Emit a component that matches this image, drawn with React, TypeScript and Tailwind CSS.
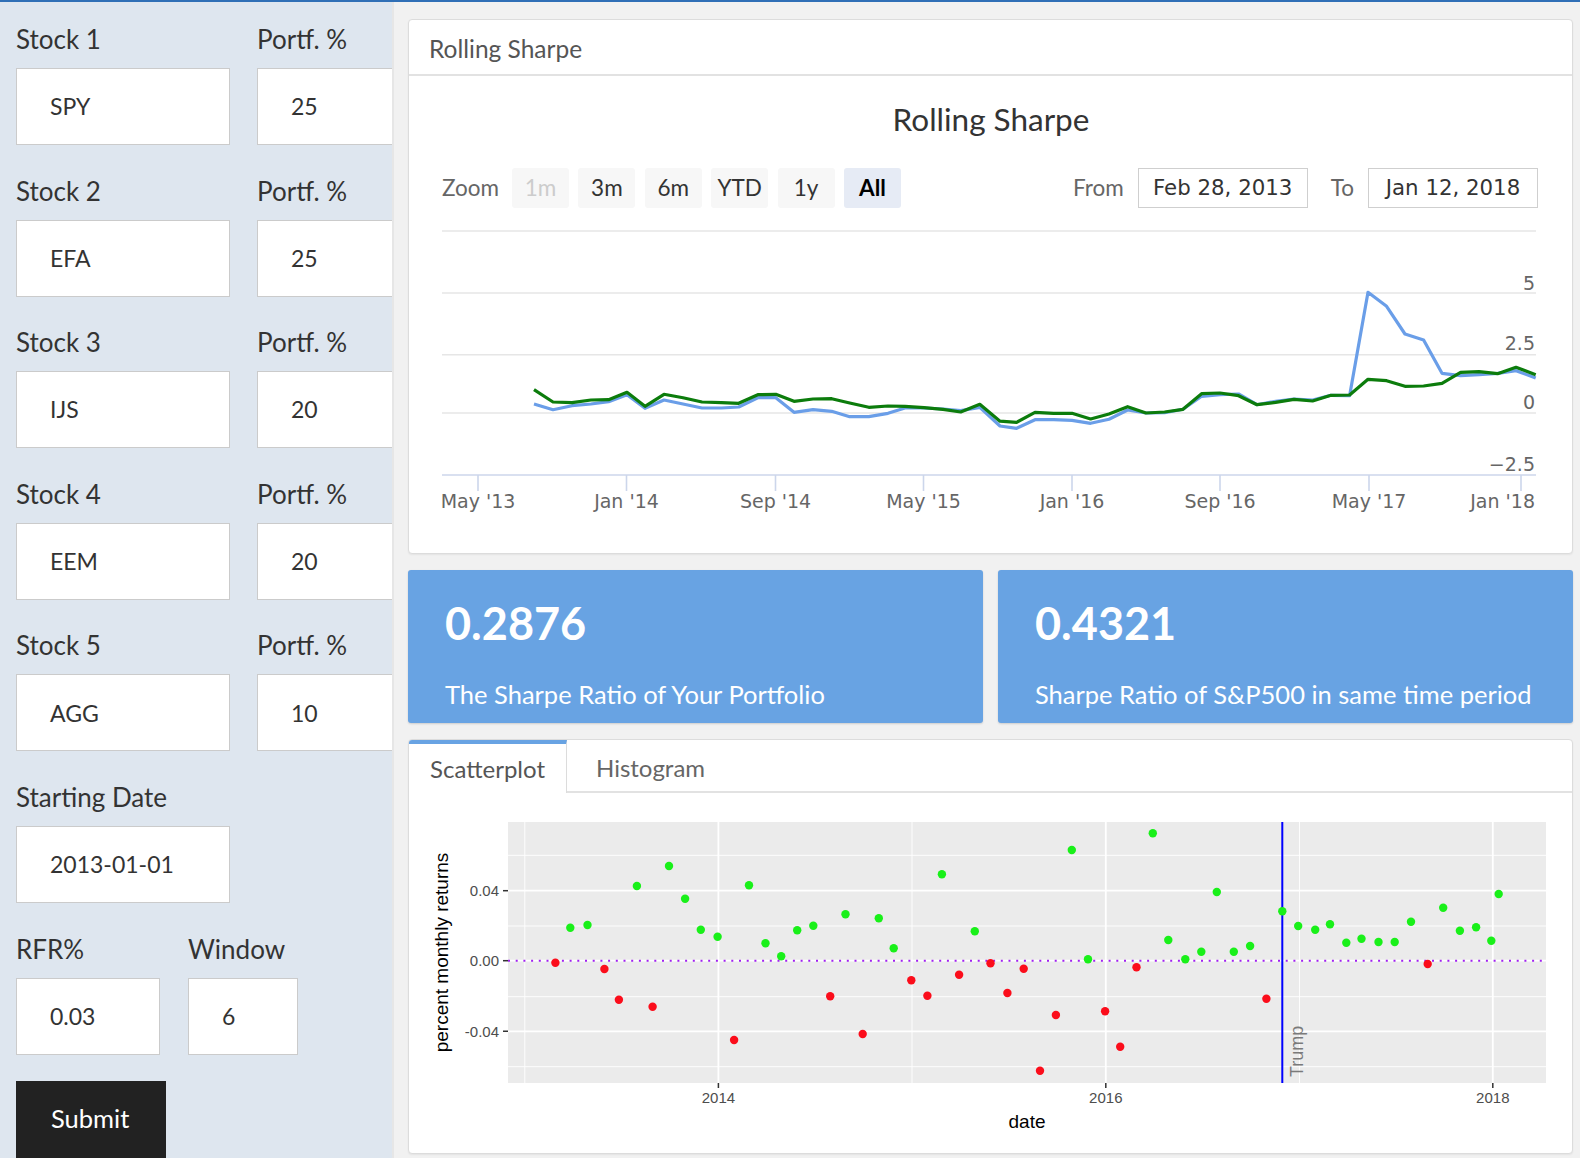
import React from "react";

const greenPts: [number, number][] = [
  [534, 390.7], [553, 403], [572, 403.7], [591, 401], [608.6, 400.7], [627, 393.3], [645, 407.3], [664, 395.3],
  [683, 398.7], [702, 403], [721.5, 403.7], [738.7, 404.3], [757.8, 395.7], [775.8, 395.3], [794, 402.3], [813, 400],
  [831.7, 399.7], [849.7, 404], [868.8, 408.3], [888, 407], [905, 407.3], [924, 408.7], [943, 410.3], [960.7, 413],
  [979.8, 405.3], [1000, 422.2], [1016.6, 423.3], [1035, 413.3], [1053.6, 414.3], [1072, 414.3], [1090.6, 420],
  [1109, 415], [1127.6, 407.7], [1146, 414], [1164.6, 413], [1183, 410.3], [1201.6, 394.7], [1220, 394],
  [1238.6, 396.7], [1257, 405.7], [1275.6, 403.3], [1294, 400.3], [1312.6, 402], [1331, 396.3], [1349.6, 396],
  [1368, 380.3], [1386.6, 381.7], [1405, 387.3], [1423.6, 387], [1442, 384.3], [1460.6, 373.3], [1479, 372.7],
  [1497.6, 374.7], [1516, 368.3], [1535.7, 375.7],
];

const blueY = [
  405, 410.7, 406.7, 405, 402.7, 395.7, 409.3, 401, 405, 409, 409, 408, 398.7, 398.7, 413.3, 410.7, 412.3, 417.7,
  417.7, 414.3, 409, 409, 410, 411.7, 408.3, 427, 429.3, 420.7, 420.7, 421.3, 424.3, 420.3, 411, 414, 413.7, 410.3,
  397.3, 395.7, 395, 405.7, 402.3, 400, 401, 396.3, 396.7, 293.3, 307.3, 335, 341, 374.3, 376.7, 375.7, 374.3,
  371.7, 379,
];

const bluePts: [number, number][] = greenPts.map((p, i) => [p[0], blueY[i]]);

const toPath = (pts: [number, number][]) => pts.map((p, i) => `${i === 0 ? "M" : "L"}${p[0]} ${p[1]}`).join(" ");

// scatter: [x, y, positive]
const scatter: [number, number, boolean][] = [
  [555.4, 962.7, false], [570.3, 927.7, true], [587.5, 925, true], [604.4, 969, false], [618.9, 999.7, false],
  [636.9, 886, true], [652.6, 1006.7, false], [669, 866, true], [685.1, 898.7, true], [700.8, 929.7, true],
  [717.6, 936.7, true], [734.1, 1040, false], [749, 885.3, true], [765.5, 943.3, true], [781.2, 956.3, true],
  [797.2, 930.3, true], [813.3, 925.7, true], [830.2, 996.3, false], [845.5, 914.3, true], [862.7, 1034, false],
  [878.8, 918.3, true], [893.7, 948.3, true], [911.3, 980.3, false], [927.4, 995.7, false], [941.9, 874.3, true],
  [959.1, 974.7, false], [974.8, 931.3, true], [990.5, 963.3, false], [1007.4, 993, false], [1023.7, 968.7, false],
  [1040, 1070.7, false], [1055.9, 1015, false], [1071.8, 850, true], [1088, 959.3, true], [1105.1, 1011.3, false],
  [1120.2, 1046.7, false], [1136.5, 967.3, false], [1152.8, 833.3, true], [1168.3, 940, true], [1185.3, 959.3, true],
  [1201.3, 951.7, true], [1216.8, 892, true], [1233.8, 951.7, true], [1250.1, 946, true], [1266.4, 998.7, false],
  [1282.3, 911.3, true], [1298.2, 926, true], [1315.2, 929.7, true], [1330, 924.3, true], [1346.3, 942.7, true],
  [1361.5, 938.7, true], [1378.5, 942, true], [1394.7, 942, true], [1411, 921.7, true], [1427.7, 964, false],
  [1443.2, 907.7, true], [1459.9, 930.7, true], [1476.1, 927.3, true], [1491.3, 940.7, true], [1498.7, 894, true],
];

const stockRows = [
  ["Stock 1", "SPY", "25"],
  ["Stock 2", "EFA", "25"],
  ["Stock 3", "IJS", "20"],
  ["Stock 4", "EEM", "20"],
  ["Stock 5", "AGG", "10"],
];

function Field({ label, value, w }: { label: string; value: string; w: string }) {
  return (
    <div className={`${w} shrink-0`}>
      <div className="h-[38px] leading-[38px] text-[26px] text-[#333] mb-[10px] whitespace-nowrap">{label}</div>
      <div className="h-[77px] border-[1.5px] border-[#cbcbcb] bg-white flex items-center pl-[33px] text-[23px] text-[#333]">
        {value}
      </div>
    </div>
  );
}

function Sidebar() {
  return (
    <aside className="w-[394px] shrink-0 bg-[#dee6ef] border-r-2 border-[#e6e6e6] overflow-hidden pt-[18px] pl-[16px]">
      {stockRows.map(([l, v, p]) => (
        <div key={l} className="flex gap-[27px] mb-[26.6px] w-[460px]">
          <Field label={l} value={v} w="w-[214px]" />
          <Field label="Portf. %" value={p} w="w-[214px]" />
        </div>
      ))}
      <div className="flex mb-[26.6px]">
        <Field label="Starting Date" value="2013-01-01" w="w-[214px]" />
      </div>
      <div className="flex gap-[28px] mb-[26px]">
        <Field label="RFR%" value="0.03" w="w-[144px]" />
        <Field label="Window" value="6" w="w-[110px]" />
      </div>
      <button className="w-[150px] h-[78px] bg-[#222] text-white text-[25.5px] text-left pl-[35px] pb-[3px]">Submit</button>
    </aside>
  );
}

const HC = "DejaVu Sans, Verdana, sans-serif";

function RollingSharpe() {
  const xTicks: [number, string][] = [
    [478, "May '13"], [626.5, "Jan '14"], [775.5, "Sep '14"], [923.5, "May '15"], [1072, "Jan '16"],
    [1220, "Sep '16"], [1369, "May '17"],
  ];
  const btns = ["1m", "3m", "6m", "YTD", "1y", "All"];
  return (
    <section className="bg-white border border-[#dcdcdc] rounded-[4px] shadow-[0_1px_2px_rgba(0,0,0,0.06)]">
      <div className="h-[56px] border-b-2 border-[#e2e2e2] flex items-center pt-[4px] pl-[20px] text-[24.5px] text-[#555]">
        Rolling Sharpe
      </div>
      <div className="mt-[24px] h-[38px] leading-[38px] text-center text-[31.5px] text-[#333] pl-[1px]">Rolling Sharpe</div>
      <div className="mt-[30px] h-[40px] flex items-center pl-[33px] pr-[34px]">
        <span className="w-[70px] shrink-0 text-[22.5px] text-[#666]">Zoom</span>
        <div className="flex gap-[9.4px]">
          {btns.map((b) => (
            <div
              key={b}
              className={`w-[57px] h-[40px] rounded-[3px] flex items-center justify-center text-[22.5px] ${
                b === "All"
                  ? "bg-[#e6ebf5] text-black font-bold"
                  : b === "1m"
                  ? "bg-[#f7f7f7] text-[#cccccc]"
                  : "bg-[#f7f7f7] text-[#333]"
              }`}
            >
              {b}
            </div>
          ))}
        </div>
        <div className="ml-auto flex items-center">
          <span className="text-[22.5px] text-[#666] mr-[14px]">From</span>
          <div className="w-[170px] h-[40px] border-[1.5px] border-[#cfcfcf] flex items-center justify-center text-[21.3px] text-[#333] font-['DejaVu_Sans',sans-serif]">
            Feb 28, 2013
          </div>
          <span className="text-[22.5px] text-[#666] ml-[23px] mr-[14px]">To</span>
          <div className="w-[170px] h-[40px] border-[1.5px] border-[#cfcfcf] flex items-center justify-center text-[21.3px] text-[#333] font-['DejaVu_Sans',sans-serif]">
            Jan 12, 2018
          </div>
        </div>
      </div>
      <svg width="1163" height="345" viewBox="409 209 1163 345" className="block">
        {[232, 294, 355.7, 414].map((y) => (
          <line key={y} x1={442} x2={1536} y1={y} y2={y} stroke="#e6e6e6" strokeWidth={1.6} />
        ))}
        <line x1={442} x2={1536} y1={476} y2={476} stroke="#ccd6eb" strokeWidth={1.6} />
        {[...xTicks.map((t) => t[0]), 1521].map((x) => (
          <line key={x} x1={x} x2={x} y1={476} y2={492} stroke="#ccd6eb" strokeWidth={1.6} />
        ))}
        <g fontFamily={HC} fontSize={19} fill="#666">
          {xTicks.map(([x, t]) => (
            <text key={t} x={x} y={509} textAnchor="middle">
              {t}
            </text>
          ))}
          <text x={1535} y={509} textAnchor="end">
            Jan '18
          </text>
          <text x={1535} y={290.7} textAnchor="end">5</text>
          <text x={1535} y={351} textAnchor="end">2.5</text>
          <text x={1535} y={410} textAnchor="end">0</text>
          <text x={1535} y={471.7} textAnchor="end">−2.5</text>
        </g>
        <path d={toPath(bluePts)} fill="none" stroke="#6a9ee8" strokeWidth={3.2} strokeLinejoin="round" />
        <path d={toPath(greenPts)} fill="none" stroke="#0c7c0c" strokeWidth={3.2} strokeLinejoin="round" />
      </svg>
    </section>
  );
}

function ValueBox({ value, label }: { value: string; label: string }) {
  return (
    <div className="flex-1 h-[153px] bg-[#68a3e3] rounded-[3px] shadow-[0_1px_2px_rgba(0,0,0,0.15)] pl-[37px] text-white">
      <div className="pt-[28px] h-[77px] leading-[50px] text-[45px] font-bold">{value}</div>
      <div className="mt-[30px] h-[34px] leading-[34px] text-[25.5px]">{label}</div>
    </div>
  );
}

function ScatterPanel() {
  const L = 508, R = 1546, T = 822, B = 1083;
  return (
    <section className="bg-white border border-[#dcdcdc] rounded-[4px] shadow-[0_1px_2px_rgba(0,0,0,0.06)] overflow-hidden">
      <div className="flex h-[53px]">
        <div className="w-[158px] border-t-4 border-[#68a3e3] border-r border-r-[#dcdcdc] flex items-center pl-[21px] text-[24px] text-[#555]">
          Scatterplot
        </div>
        <div className="flex-1 border-b-2 border-[#e2e2e2] flex items-center pt-[5px] pl-[29px] text-[24px] text-[#666]">
          Histogram
        </div>
      </div>
      <svg width="1163" height="360" viewBox="409 793 1163 360" className="block">
        <rect x={L} y={T} width={R - L} height={B - T} fill="#ebebeb" />
        {[855.3, 926, 996.7, 1066.7].map((y) => (
          <line key={y} x1={L} x2={R} y1={y} y2={y} stroke="#fff" strokeWidth={0.9} />
        ))}
        {[524.8, 912, 1299.5].map((x) => (
          <line key={x} x1={x} x2={x} y1={T} y2={B} stroke="#fff" strokeWidth={0.9} />
        ))}
        {[890.7, 960.7, 1031.3].map((y) => (
          <line key={y} x1={L} x2={R} y1={y} y2={y} stroke="#fff" strokeWidth={1.8} />
        ))}
        {[718.4, 1105.8, 1492.8].map((x) => (
          <line key={x} x1={x} x2={x} y1={T} y2={B} stroke="#fff" strokeWidth={1.8} />
        ))}
        <line x1={L} x2={R} y1={960.7} y2={960.7} stroke="#a020f0" strokeWidth={2} strokeDasharray="2 5.7" />
        <line x1={1282.3} x2={1282.3} y1={T} y2={B} stroke="#0000ff" strokeWidth={2} />
        <text
          transform="translate(1303.4 1077) rotate(-90)"
          fontFamily="Liberation Sans, Arial, sans-serif"
          fontSize={18}
          fill="#7a7a7a"
        >
          Trump
        </text>
        {scatter.map(([x, y, pos], i) => (
          <circle key={i} cx={x} cy={y} r={4.2} fill={pos ? "#19f019" : "#fb0d1b"} />
        ))}
        <g stroke="#333" strokeWidth={1.5}>
          {[890.7, 960.7, 1031.3].map((y) => (
            <line key={y} x1={503} x2={L} y1={y} y2={y} />
          ))}
          {[718.4, 1105.8, 1492.8].map((x) => (
            <line key={x} x1={x} x2={x} y1={B} y2={B + 5} />
          ))}
        </g>
        <g fontFamily="Liberation Sans, Arial, sans-serif" fontSize={15} fill="#4d4d4d">
          <text x={499} y={896} textAnchor="end">0.04</text>
          <text x={499} y={966} textAnchor="end">0.00</text>
          <text x={499} y={1036.5} textAnchor="end">-0.04</text>
          <text x={718.4} y={1102.7} textAnchor="middle">2014</text>
          <text x={1105.8} y={1102.7} textAnchor="middle">2016</text>
          <text x={1492.8} y={1102.7} textAnchor="middle">2018</text>
        </g>
        <g fontFamily="Liberation Sans, Arial, sans-serif" fontSize={19} fill="#000">
          <text x={1027} y={1128.3} textAnchor="middle">date</text>
          <text transform="translate(447.5 952.5) rotate(-90)" textAnchor="middle">
            percent monthly returns
          </text>
        </g>
      </svg>
    </section>
  );
}

export default function App() {
  return (
    <div className="w-[1580px] h-[1158px] overflow-hidden bg-[#f1f1f1] font-['Lato',sans-serif]">
      <div className="h-[2px] bg-[#2f6fb6]" />
      <div className="flex h-[1156px]">
        <Sidebar />
        <main className="flex-1 pl-[14px] pr-[7px] pt-[17px]">
          <RollingSharpe />
          <div className="flex gap-[15px] mt-[16px]">
            <ValueBox value="0.2876" label="The Sharpe Ratio of Your Portfolio" />
            <ValueBox value="0.4321" label="Sharpe Ratio of S&P500 in same time period" />
          </div>
          <div className="mt-[16px]">
            <ScatterPanel />
          </div>
        </main>
      </div>
    </div>
  );
}
